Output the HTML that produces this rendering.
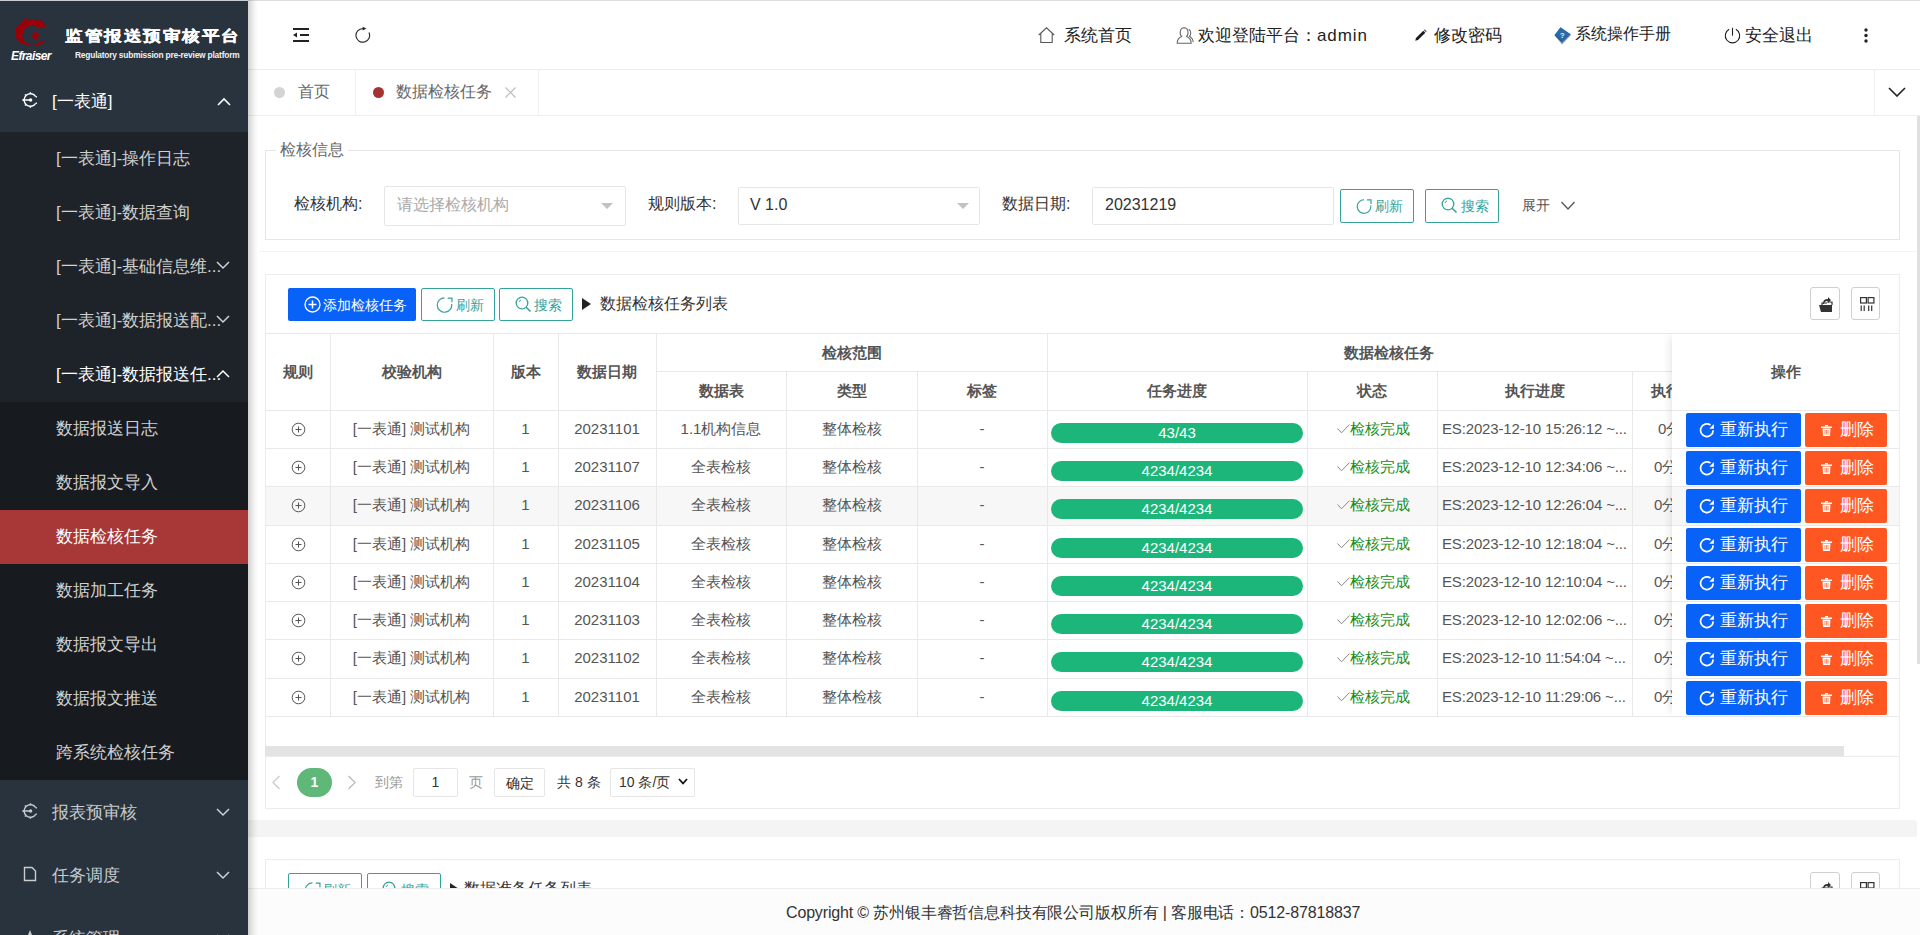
<!DOCTYPE html>
<html><head><meta charset="utf-8">
<style>
*{margin:0;padding:0;box-sizing:border-box}
html,body{width:1920px;height:935px;overflow:hidden;background:#fff;font-family:"Liberation Sans",sans-serif;color:#333}
.a{position:absolute;white-space:nowrap}
#side{position:absolute;left:0;top:0;width:248px;height:935px;background:#28333e;overflow:hidden}
.row{position:absolute;left:0;width:248px}
.sub{background:#1e2329}
.sub2{background:#171b20}
.act{background:#a83737}
.mt{position:absolute;left:56px;font-size:17px;color:#d0d0d0;white-space:nowrap;line-height:20px}
#shadow{position:absolute;left:248px;top:0;width:10px;height:935px;background:linear-gradient(to right,rgba(0,0,0,.18),rgba(0,0,0,.05) 60%,rgba(0,0,0,0));z-index:5}
#hdr{position:absolute;left:248px;top:0;width:1672px;height:70px;background:#fff;border-bottom:1px solid #ececec;border-top:1px solid #dedede}
.ht{position:absolute;font-size:17px;color:#222;white-space:nowrap;top:25px;line-height:20px}
#tabs{position:absolute;left:248px;top:70px;width:1672px;height:46px;background:#fff;border-bottom:1px solid #efefef}
.panel{position:absolute;border:1px solid #e8e8e8;background:#fff}
.bo{position:absolute;border:1px solid #35a39b;color:#35a39b;border-radius:2px;font-size:14px;background:#fff;white-space:nowrap}
#footer{position:absolute;left:248px;top:888px;width:1672px;height:47px;background:#fcfcfc;border-top:1px solid #ececec;font-size:16px;color:#333;z-index:4}
table{border-collapse:collapse;table-layout:fixed}
.tc{position:absolute;text-align:center;font-size:15px;color:#555;white-space:nowrap;overflow:hidden}
.th{position:absolute;text-align:center;font-size:15px;color:#555;font-weight:bold;white-space:nowrap}
.hl{position:absolute;height:1px;background:#e9e9e9}
.vl{position:absolute;width:1px;background:#e9e9e9}
</style></head><body>
<div id="side">
  <div class="a" style="left:0;top:0;width:248px;height:1px;background:#c9cdd1"></div>
  <!-- logo -->
  <svg class="a" style="left:13px;top:16px" width="36" height="32" viewBox="0 0 36 32"><path d="M31 8 A16.9 13 0 1 0 32.8 24.5 L26.6 25.2 A9.6 9.6 0 1 1 25.2 11.95 Z" fill="#9b0009"/><path d="M10.5 1.5 L15.5 4 L12 6.5 Z" fill="#9b0009"/><path d="M25 3.8 C28 4.5 30 6 31.5 8 L32.5 11.5 L25.2 11.95 Z" fill="#9b0009"/><path d="M21.8 15.3 L26.2 18.5 L23.5 24 L18.3 21 Z" fill="#9b0009"/></svg>
  <div class="a" style="left:11px;top:49px;font-size:12px;font-style:italic;font-weight:bold;color:#fff;letter-spacing:-0.6px">Efraiser</div>
  <div class="a" style="left:65px;top:27.5px;font-size:16px;line-height:18px;font-weight:bold;color:#fff;letter-spacing:2.1px;transform-origin:0 0;transform:scale(1.08,0.92);-webkit-text-stroke:0.35px #fff">监管报送预审核平台</div>
  <div class="a" style="left:75px;top:50px;font-size:8.4px;line-height:11px;color:#f0f0f0;font-weight:bold;letter-spacing:-0.2px">Regulatory submission pre-review platform</div>

  <div class="row" style="top:70px;height:62px">
    <svg class="a" style="left:22px;top:22px" width="16" height="16" viewBox="0 0 16 16"><path d="M13.74 4.66 A6.3 6.3 0 1 0 13.74 11.34" fill="none" stroke="#fff" stroke-width="1.4"/><path d="M8.40 1.70 L8.40 0.20 M3.95 3.55 L2.88 2.48 M2.10 8.00 L0.60 8.00 M3.95 12.45 L2.88 13.52 M8.40 14.30 L8.40 15.80 M13.74 4.66 L14.9 5.2 M13.74 11.34 L14.9 10.8" stroke="#fff" stroke-width="1.4"/><path d="M0.6 8 H8" stroke="#fff" stroke-width="1.5"/><circle cx="8.6" cy="8" r="1.7" fill="#fff"/></svg>
    <div class="a" style="left:52px;top:22px;font-size:17px;color:#fff;line-height:20px">[一表通]</div>
    <svg class="a" style="left:217px;top:27px" width="14" height="9" viewBox="0 0 14 9"><path d="M1 8 L7 2 L13 8" fill="none" stroke="#fff" stroke-width="1.6"/></svg>
  </div>
  <div class="row sub" style="top:132px;height:270px">
    <div class="mt" style="top:17px">[一表通]-操作日志</div>
    <div class="mt" style="top:71px">[一表通]-数据查询</div>
    <div class="mt" style="top:125px">[一表通]-基础信息维...</div>
    <div class="mt" style="top:179px">[一表通]-数据报送配...</div>
    <div class="mt" style="top:233px;color:#fff">[一表通]-数据报送任...</div>
    <svg class="a" style="left:216px;top:129px" width="14" height="9" viewBox="0 0 14 9"><path d="M1 1 L7 7 L13 1" fill="none" stroke="#d0d0d0" stroke-width="1.5"/></svg>
    <svg class="a" style="left:216px;top:183px" width="14" height="9" viewBox="0 0 14 9"><path d="M1 1 L7 7 L13 1" fill="none" stroke="#d0d0d0" stroke-width="1.5"/></svg>
    <svg class="a" style="left:216px;top:237px" width="14" height="9" viewBox="0 0 14 9"><path d="M1 8 L7 2 L13 8" fill="none" stroke="#fff" stroke-width="1.5"/></svg>
  </div>
  <div class="row sub2" style="top:402px;height:378px">
    <div class="row act" style="top:108px;height:54px"></div>
    <div class="mt" style="top:17px">数据报送日志</div>
    <div class="mt" style="top:71px">数据报文导入</div>
    <div class="mt" style="top:125px;color:#fff">数据检核任务</div>
    <div class="mt" style="top:179px">数据加工任务</div>
    <div class="mt" style="top:233px">数据报文导出</div>
    <div class="mt" style="top:287px">数据报文推送</div>
    <div class="mt" style="top:341px">跨系统检核任务</div>
  </div>
  <div class="row" style="top:780px;height:63px">
    <svg class="a" style="left:22px;top:23px" width="16" height="16" viewBox="0 0 16 16"><path d="M13.74 4.66 A6.3 6.3 0 1 0 13.74 11.34" fill="none" stroke="#c8ccd0" stroke-width="1.4"/><path d="M8.40 1.70 L8.40 0.20 M3.95 3.55 L2.88 2.48 M2.10 8.00 L0.60 8.00 M3.95 12.45 L2.88 13.52 M8.40 14.30 L8.40 15.80 M13.74 4.66 L14.9 5.2 M13.74 11.34 L14.9 10.8" stroke="#c8ccd0" stroke-width="1.4"/><path d="M0.6 8 H8" stroke="#c8ccd0" stroke-width="1.5"/><circle cx="8.6" cy="8" r="1.7" fill="#c8ccd0"/></svg>
    <div class="a" style="left:52px;top:23px;font-size:17px;color:#c8ccd0;line-height:20px">报表预审核</div>
    <svg class="a" style="left:216px;top:28px" width="14" height="9" viewBox="0 0 14 9"><path d="M1 1 L7 7 L13 1" fill="none" stroke="#d0d0d0" stroke-width="1.5"/></svg>
  </div>
  <div class="row" style="top:843px;height:63px">
    <svg class="a" style="left:23px;top:23px" width="14" height="16" viewBox="0 0 14 16"><path d="M1.5 1.5 H9 L12.5 5 V14.5 H1.5 Z" fill="none" stroke="#ccc" stroke-width="1.4"/></svg>
    <div class="a" style="left:52px;top:23px;font-size:17px;color:#c8ccd0;line-height:20px">任务调度</div>
    <svg class="a" style="left:216px;top:28px" width="14" height="9" viewBox="0 0 14 9"><path d="M1 1 L7 7 L13 1" fill="none" stroke="#d0d0d0" stroke-width="1.5"/></svg>
  </div>
  <div class="row" style="top:906px;height:63px">
    <svg class="a" style="left:22px;top:23px" width="16" height="16" viewBox="0 0 16 16"><path d="M8 1 L10 6 L15 6 L11 9.5 L12.5 15 L8 11.5 L3.5 15 L5 9.5 L1 6 L6 6 Z" fill="#ccc"/></svg>
    <div class="a" style="left:52px;top:23px;font-size:17px;color:#c8ccd0;line-height:20px">系统管理</div>
    <svg class="a" style="left:216px;top:28px" width="14" height="9" viewBox="0 0 14 9"><path d="M1 1 L7 7 L13 1" fill="none" stroke="#d0d0d0" stroke-width="1.5"/></svg>
  </div>
</div>
<div id="shadow"></div>

<div id="hdr">
  <svg class="a" style="left:44px;top:26px;margin-top:-0.5px" width="18" height="16" viewBox="0 0 18 16"><rect x="1" y="1" width="16" height="2" fill="#222"/><rect x="8" y="7" width="9" height="2" fill="#222"/><rect x="1" y="13" width="16" height="2" fill="#222"/><path d="M1 8 L5 5.5 L5 10.5 Z" fill="#222"/></svg>
  <svg class="a" style="left:106px;top:25px" width="17" height="17" viewBox="0 0 17 17"><path d="M8.8 2.6 A6.8 6.8 0 1 0 14.96 6.53" fill="none" stroke="#333" stroke-width="1.2"/><path d="M8.6 0.8 L12.4 2.6 L8.6 4.5 Z" fill="#222"/></svg>
  <svg class="a" style="left:789px;top:25px" width="18" height="18" viewBox="0 0 18 18"><path d="M1.8 9 L9.5 1.8 L17.2 9 M3.8 7.3 V16.5 H15.2 V7.3" fill="none" stroke="#555" stroke-width="1.1"/></svg>
  <div class="ht" style="left:816px">系统首页</div>
  <svg class="a" style="left:928px;top:25px" width="18" height="18" viewBox="0 0 18 18"><path d="M5.6 10.4 C3.3 8.6 3.6 1.8 8.1 1.7 C12.6 1.8 12.9 8.6 10.6 10.4 C13.3 11.4 15.2 14 15.2 17.3 H1.2 C1.2 14 3 11.4 5.6 10.4 Z" fill="none" stroke="#666" stroke-width="1.05"/><path d="M12.6 3.2 C15.2 4.2 15.3 8.6 13.5 10.3 C15.6 11.5 17 13.5 17.2 16.3" fill="none" stroke="#666" stroke-width="1.05"/></svg>
  <div class="ht" style="left:950px">欢迎登陆平台：<span style="letter-spacing:0.9px">admin</span></div>
  <svg class="a" style="left:1166px;top:28px" width="13" height="13" viewBox="0 0 13 13"><path d="M1.2 11.8 L2.0 9.0 L9.3 1.7 L11.3 3.7 L4.0 11.0 Z" fill="#1a1a1a"/><path d="M9.9 1.1 L10.6 0.4 L12.6 2.4 L11.9 3.1 Z" fill="#1a1a1a"/></svg>
  <div class="ht" style="left:1186px">修改密码</div>
  <svg class="a" style="left:1306px;top:26px" width="18" height="18" viewBox="0 0 18 18"><path d="M0.5 8.5 L6.5 0.5 L17 8 L8 17.5 Z" fill="#8aa4bf"/><path d="M0.5 8 L6.5 0.3 L16.8 7.3 L8 15.8 Z" fill="#2b6aa8"/><path d="M1.5 8.2 L7.8 14.6" stroke="#1d4f82" stroke-width="1"/><text x="6" y="10.5" font-size="7.5" fill="#e8f0ff" font-family="Liberation Sans" font-weight="bold">?</text></svg>
  <div class="ht" style="left:1327px;font-size:16px;top:23px">系统操作手册</div>
  <svg class="a" style="left:1475px;top:26px" width="19" height="18" viewBox="0 0 19 18"><path d="M6.12 2.34 A7.2 7.2 0 1 0 12.88 2.34" fill="none" stroke="#222" stroke-width="1.1"/><path d="M9.5 0.8 V8.7" stroke="#222" stroke-width="1.1"/></svg>
  <div class="ht" style="left:1497px">安全退出</div>
  <svg class="a" style="left:1616px;top:27px" width="4" height="15" viewBox="0 0 4 15"><circle cx="2" cy="2" r="1.7" fill="#222"/><circle cx="2" cy="7.5" r="1.7" fill="#222"/><circle cx="2" cy="13" r="1.7" fill="#222"/></svg>
</div>


<div id="tabs">
  <div class="a" style="left:107px;top:0;width:1px;height:45px;background:#f0f0f0"></div>
  <div class="a" style="left:290px;top:0;width:1px;height:45px;background:#f0f0f0"></div>
  <div class="a" style="left:1626px;top:0;width:1px;height:45px;background:#efefef"></div>
  <div class="a" style="left:26px;top:17px;width:11px;height:11px;border-radius:50%;background:#d4d4d4"></div>
  <div class="a" style="left:50px;top:12px;font-size:16px;color:#666;line-height:20px">首页</div>
  <div class="a" style="left:125px;top:17px;width:11px;height:11px;border-radius:50%;background:#a83232"></div>
  <div class="a" style="left:148px;top:12px;font-size:16px;color:#666;line-height:20px">数据检核任务</div>
  <svg class="a" style="left:257px;top:17px" width="11" height="11" viewBox="0 0 11 11"><path d="M0.5 0.5 L10.5 10.5 M10.5 0.5 L0.5 10.5" stroke="#bbb" stroke-width="1.1"/></svg>
  <svg class="a" style="left:1640px;top:17px" width="18" height="10" viewBox="0 0 18 10"><path d="M1 1 L9 9 L17 1" fill="none" stroke="#222" stroke-width="1.6"/></svg>
</div>

<!--MAIN_START-->
<div class="a" style="left:265px;top:150px;width:1635px;height:90px;border:1px solid #e6e6e6"></div>
<div class="a" style="left:276px;top:140px;width:72px;height:20px;background:#fff"></div>
<div class="a" style="left:280px;top:140px;font-size:16px;color:#666;line-height:20px;">检核信息</div>
<div class="a" style="left:259px;top:251px;width:1661px;height:1px;background:#f2f2f2"></div>
<div class="a" style="left:294px;top:194px;font-size:16px;color:#333;line-height:20px;">检核机构:</div>
<div class="a" style="left:648px;top:194px;font-size:16px;color:#333;line-height:20px;">规则版本:</div>
<div class="a" style="left:1002px;top:194px;font-size:16px;color:#333;line-height:20px;">数据日期:</div>
<div class="a" style="left:384px;top:186px;width:242px;height:40px;border:1px solid #e6e6e6;border-radius:2px"></div>
<div class="a" style="left:397px;top:195px;font-size:16px;color:#aaa;line-height:20px;">请选择检核机构</div>
<svg class="a" style="left:601px;top:203px" width="12" height="6" viewBox="0 0 12 6"><path d="M0 0 H12 L6 6 Z" fill="#c2c2c2"/></svg>
<div class="a" style="left:738px;top:187px;width:242px;height:38px;border:1px solid #e6e6e6;border-radius:2px"></div>
<div class="a" style="left:750px;top:195px;font-size:16px;color:#333;line-height:20px;">V 1.0</div>
<svg class="a" style="left:957px;top:203px" width="12" height="6" viewBox="0 0 12 6"><path d="M0 0 H12 L6 6 Z" fill="#c2c2c2"/></svg>
<div class="a" style="left:1092px;top:187px;width:242px;height:38px;border:1px solid #e6e6e6;border-radius:2px"></div>
<div class="a" style="left:1105px;top:195px;font-size:16px;color:#333;line-height:20px;">20231219</div>
<div class="bo" style="left:1340px;top:189px;width:74px;height:34px"></div>
<svg class="a" style="left:1356px;top:198px" width="16" height="16" viewBox="0 0 16 16"><path d="M8 1.7 A6.8 6.8 0 1 0 14.7 7.32" fill="none" stroke="#35a39b" stroke-width="1.15"/><path d="M11 1.9 H15 V5.9" fill="none" stroke="#35a39b" stroke-width="1.15"/></svg>
<div class="a" style="left:1375px;top:196px;font-size:14px;color:#35a39b;line-height:20px;">刷新</div>
<div class="bo" style="left:1425px;top:189px;width:74px;height:34px"></div>
<svg class="a" style="left:1441px;top:197px" width="17" height="17" viewBox="0 0 17 17"><circle cx="7" cy="7" r="5.8" fill="none" stroke="#35a39b" stroke-width="1.3"/><path d="M11.2 11.2 L15.5 15.5" stroke="#35a39b" stroke-width="1.6"/><path d="M4 6 A3 3 0 0 1 6 4" fill="none" stroke="#35a39b" stroke-width="1"/></svg>
<div class="a" style="left:1461px;top:196px;font-size:14px;color:#35a39b;line-height:20px;">搜索</div>
<div class="a" style="left:1522px;top:195px;font-size:14px;color:#555;line-height:20px;">展开</div>
<svg class="a" style="left:1561px;top:201px" width="14" height="9" viewBox="0 0 14 9"><path d="M0.5 1 L7 8 L13.5 1" fill="none" stroke="#555" stroke-width="1.3"/></svg>
<div class="a" style="left:265px;top:274px;width:1635px;height:535px;border:1px solid #ececec"></div>
<div class="a" style="left:288px;top:288px;width:128px;height:33px;background:#0862f7;border-radius:2px"></div>
<svg class="a" style="left:304px;top:296px" width="17" height="17" viewBox="0 0 17 17"><circle cx="8.5" cy="8.5" r="7.5" fill="none" stroke="#fff" stroke-width="1.3"/><path d="M8.5 4.5 V12.5 M4.5 8.5 H12.5" stroke="#fff" stroke-width="1.5"/></svg>
<div class="a" style="left:323px;top:295px;font-size:14px;color:#fff;line-height:20px;">添加检核任务</div>
<div class="bo" style="left:421px;top:288px;width:74px;height:33px"></div>
<svg class="a" style="left:436px;top:296px" width="17" height="17" viewBox="0 0 16 16"><path d="M8 1.7 A6.8 6.8 0 1 0 14.7 7.32" fill="none" stroke="#35a39b" stroke-width="1.15"/><path d="M11 1.9 H15 V5.9" fill="none" stroke="#35a39b" stroke-width="1.15"/></svg>
<div class="a" style="left:456px;top:295px;font-size:14px;color:#35a39b;line-height:20px;">刷新</div>
<div class="bo" style="left:499px;top:288px;width:74px;height:33px"></div>
<svg class="a" style="left:515px;top:296px" width="17" height="17" viewBox="0 0 17 17"><circle cx="7" cy="7" r="5.8" fill="none" stroke="#35a39b" stroke-width="1.3"/><path d="M11.2 11.2 L15.5 15.5" stroke="#35a39b" stroke-width="1.6"/><path d="M4 6 A3 3 0 0 1 6 4" fill="none" stroke="#35a39b" stroke-width="1"/></svg>
<div class="a" style="left:534px;top:295px;font-size:14px;color:#35a39b;line-height:20px;">搜索</div>
<svg class="a" style="left:582px;top:298px" width="9" height="12" viewBox="0 0 9 12"><path d="M0 0 L9 6 L0 12 Z" fill="#222"/></svg>
<div class="a" style="left:600px;top:294px;font-size:16px;color:#333;line-height:20px;">数据检核任务列表</div>
<div class="a" style="left:1810px;top:287px;width:30px;height:33px;border:1px solid #cfcfcf;border-radius:3px"></div>
<svg class="a" style="left:1818px;top:296px" width="16" height="16" viewBox="0 0 16 16"><path d="M1 9 H14 V16 H3 Z" fill="#333"/><path d="M4 9 V7 H9 M9 6 V6 H14 V9" fill="none" stroke="#333" stroke-width="1.2"/><path d="M5 8 C5 4 7 3 10 3 V1 L13 4 L10 7 V5 C8 5 6.5 5.5 6 8" fill="#333"/></svg>
<div class="a" style="left:1851px;top:287px;width:29px;height:33px;border:1px solid #cfcfcf;border-radius:3px"></div>
<svg class="a" style="left:1860px;top:297px" width="15" height="15" viewBox="0 0 15 15"><rect x="0.6" y="0.6" width="5.8" height="5.4" fill="none" stroke="#333" stroke-width="1.2"/><rect x="8.1" y="0.6" width="5.8" height="5.4" fill="none" stroke="#333" stroke-width="1.2"/><path d="M1.2 8.5 V14 M4.2 8.5 V14 M8.7 8.5 V14 M11.7 8.5 V14" stroke="#333" stroke-width="1.2"/></svg>
<div class="hl" style="left:265px;top:333px;width:1635px"></div>
<div class="hl" style="left:656px;top:371px;width:1016px"></div>
<div class="a" style="left:266px;top:487px;width:1633px;height:38px;background:#f7f7f7"></div>
<div class="hl" style="left:265px;top:410px;width:1635px"></div>
<div class="hl" style="left:265px;top:448px;width:1635px"></div>
<div class="hl" style="left:265px;top:486px;width:1635px"></div>
<div class="hl" style="left:265px;top:525px;width:1635px"></div>
<div class="hl" style="left:265px;top:563px;width:1635px"></div>
<div class="hl" style="left:265px;top:601px;width:1635px"></div>
<div class="hl" style="left:265px;top:639px;width:1635px"></div>
<div class="hl" style="left:265px;top:678px;width:1635px"></div>
<div class="hl" style="left:265px;top:716px;width:1635px"></div>
<div class="vl" style="left:330px;top:333px;height:383px"></div>
<div class="vl" style="left:493px;top:333px;height:383px"></div>
<div class="vl" style="left:558px;top:333px;height:383px"></div>
<div class="vl" style="left:656px;top:333px;height:383px"></div>
<div class="vl" style="left:1047px;top:333px;height:383px"></div>
<div class="vl" style="left:786px;top:371px;height:345px"></div>
<div class="vl" style="left:917px;top:371px;height:345px"></div>
<div class="vl" style="left:1307px;top:371px;height:345px"></div>
<div class="vl" style="left:1437px;top:371px;height:345px"></div>
<div class="vl" style="left:1632px;top:371px;height:345px"></div>
<div class="th" style="left:265px;width:65px;top:362px;line-height:20px">规则</div>
<div class="th" style="left:330px;width:163px;top:362px;line-height:20px">校验机构</div>
<div class="th" style="left:493px;width:65px;top:362px;line-height:20px">版本</div>
<div class="th" style="left:558px;width:98px;top:362px;line-height:20px">数据日期</div>
<div class="th" style="left:656px;width:391px;top:343px;line-height:20px">检核范围</div>
<div class="th" style="left:1047px;width:684px;top:343px;line-height:20px">数据检核任务</div>
<div class="th" style="left:656px;width:130px;top:381px;line-height:20px">数据表</div>
<div class="th" style="left:786px;width:131px;top:381px;line-height:20px">类型</div>
<div class="th" style="left:917px;width:130px;top:381px;line-height:20px">标签</div>
<div class="th" style="left:1047px;width:260px;top:381px;line-height:20px">任务进度</div>
<div class="th" style="left:1307px;width:130px;top:381px;line-height:20px">状态</div>
<div class="th" style="left:1437px;width:195px;top:381px;line-height:20px">执行进度</div>
<div class="th" style="left:1651px;top:381px;line-height:20px;text-align:left">执行</div>
<svg class="a" style="left:291px;top:422px" width="15" height="15" viewBox="0 0 15 15"><circle cx="7.5" cy="7.5" r="6.3" fill="none" stroke="#555" stroke-width="1"/><path d="M7.5 4.5 V10.5 M4.5 7.5 H10.5" stroke="#555" stroke-width="1"/></svg>
<div class="tc" style="left:330px;width:163px;top:419px;line-height:20px;">[一表通] 测试机构</div>
<div class="tc" style="left:493px;width:65px;top:419px;line-height:20px;">1</div>
<div class="tc" style="left:558px;width:98px;top:419px;line-height:20px;">20231101</div>
<div class="tc" style="left:656px;width:130px;top:419px;line-height:20px;">1.1机构信息</div>
<div class="tc" style="left:786px;width:131px;top:419px;line-height:20px;">整体检核</div>
<div class="tc" style="left:917px;width:130px;top:419px;line-height:20px;">-</div>
<div class="a" style="left:1051px;top:423px;width:252px;height:20px;border-radius:10px;background:#1db67a"></div>
<div class="tc" style="left:1051px;width:252px;top:422px;line-height:20px;color:#fff;font-size:15px;line-height:22px">43/43</div>
<svg class="a" style="left:1337px;top:424px" width="13" height="10" viewBox="0 0 13 10"><path d="M0.5 4.5 L4.5 8.8 L12.5 0.5" fill="none" stroke="#888" stroke-width="1"/></svg>
<div class="a" style="left:1350px;top:419px;font-size:15px;color:#178c17;line-height:20px;">检核完成</div>
<div class="a" style="left:1442px;top:419px;font-size:15px;color:#555;line-height:20px;letter-spacing:-0.15px">ES:2023-12-10 15:26:12 ~...</div>
<div class="a" style="left:1658px;top:419px;font-size:15px;color:#555;line-height:20px;">0分</div>
<svg class="a" style="left:291px;top:460px" width="15" height="15" viewBox="0 0 15 15"><circle cx="7.5" cy="7.5" r="6.3" fill="none" stroke="#555" stroke-width="1"/><path d="M7.5 4.5 V10.5 M4.5 7.5 H10.5" stroke="#555" stroke-width="1"/></svg>
<div class="tc" style="left:330px;width:163px;top:457px;line-height:20px;">[一表通] 测试机构</div>
<div class="tc" style="left:493px;width:65px;top:457px;line-height:20px;">1</div>
<div class="tc" style="left:558px;width:98px;top:457px;line-height:20px;">20231107</div>
<div class="tc" style="left:656px;width:130px;top:457px;line-height:20px;">全表检核</div>
<div class="tc" style="left:786px;width:131px;top:457px;line-height:20px;">整体检核</div>
<div class="tc" style="left:917px;width:130px;top:457px;line-height:20px;">-</div>
<div class="a" style="left:1051px;top:461px;width:252px;height:20px;border-radius:10px;background:#1db67a"></div>
<div class="tc" style="left:1051px;width:252px;top:460px;line-height:20px;color:#fff;font-size:15px;line-height:22px">4234/4234</div>
<svg class="a" style="left:1337px;top:462px" width="13" height="10" viewBox="0 0 13 10"><path d="M0.5 4.5 L4.5 8.8 L12.5 0.5" fill="none" stroke="#888" stroke-width="1"/></svg>
<div class="a" style="left:1350px;top:457px;font-size:15px;color:#178c17;line-height:20px;">检核完成</div>
<div class="a" style="left:1442px;top:457px;font-size:15px;color:#555;line-height:20px;letter-spacing:-0.15px">ES:2023-12-10 12:34:06 ~...</div>
<div class="a" style="left:1654px;top:457px;font-size:15px;color:#555;line-height:20px;">0分</div>
<svg class="a" style="left:291px;top:498px" width="15" height="15" viewBox="0 0 15 15"><circle cx="7.5" cy="7.5" r="6.3" fill="none" stroke="#555" stroke-width="1"/><path d="M7.5 4.5 V10.5 M4.5 7.5 H10.5" stroke="#555" stroke-width="1"/></svg>
<div class="tc" style="left:330px;width:163px;top:495px;line-height:20px;">[一表通] 测试机构</div>
<div class="tc" style="left:493px;width:65px;top:495px;line-height:20px;">1</div>
<div class="tc" style="left:558px;width:98px;top:495px;line-height:20px;">20231106</div>
<div class="tc" style="left:656px;width:130px;top:495px;line-height:20px;">全表检核</div>
<div class="tc" style="left:786px;width:131px;top:495px;line-height:20px;">整体检核</div>
<div class="tc" style="left:917px;width:130px;top:495px;line-height:20px;">-</div>
<div class="a" style="left:1051px;top:499px;width:252px;height:20px;border-radius:10px;background:#1db67a"></div>
<div class="tc" style="left:1051px;width:252px;top:498px;line-height:20px;color:#fff;font-size:15px;line-height:22px">4234/4234</div>
<svg class="a" style="left:1337px;top:500px" width="13" height="10" viewBox="0 0 13 10"><path d="M0.5 4.5 L4.5 8.8 L12.5 0.5" fill="none" stroke="#888" stroke-width="1"/></svg>
<div class="a" style="left:1350px;top:495px;font-size:15px;color:#178c17;line-height:20px;">检核完成</div>
<div class="a" style="left:1442px;top:495px;font-size:15px;color:#555;line-height:20px;letter-spacing:-0.15px">ES:2023-12-10 12:26:04 ~...</div>
<div class="a" style="left:1654px;top:495px;font-size:15px;color:#555;line-height:20px;">0分</div>
<svg class="a" style="left:291px;top:537px" width="15" height="15" viewBox="0 0 15 15"><circle cx="7.5" cy="7.5" r="6.3" fill="none" stroke="#555" stroke-width="1"/><path d="M7.5 4.5 V10.5 M4.5 7.5 H10.5" stroke="#555" stroke-width="1"/></svg>
<div class="tc" style="left:330px;width:163px;top:534px;line-height:20px;">[一表通] 测试机构</div>
<div class="tc" style="left:493px;width:65px;top:534px;line-height:20px;">1</div>
<div class="tc" style="left:558px;width:98px;top:534px;line-height:20px;">20231105</div>
<div class="tc" style="left:656px;width:130px;top:534px;line-height:20px;">全表检核</div>
<div class="tc" style="left:786px;width:131px;top:534px;line-height:20px;">整体检核</div>
<div class="tc" style="left:917px;width:130px;top:534px;line-height:20px;">-</div>
<div class="a" style="left:1051px;top:538px;width:252px;height:20px;border-radius:10px;background:#1db67a"></div>
<div class="tc" style="left:1051px;width:252px;top:537px;line-height:20px;color:#fff;font-size:15px;line-height:22px">4234/4234</div>
<svg class="a" style="left:1337px;top:539px" width="13" height="10" viewBox="0 0 13 10"><path d="M0.5 4.5 L4.5 8.8 L12.5 0.5" fill="none" stroke="#888" stroke-width="1"/></svg>
<div class="a" style="left:1350px;top:534px;font-size:15px;color:#178c17;line-height:20px;">检核完成</div>
<div class="a" style="left:1442px;top:534px;font-size:15px;color:#555;line-height:20px;letter-spacing:-0.15px">ES:2023-12-10 12:18:04 ~...</div>
<div class="a" style="left:1654px;top:534px;font-size:15px;color:#555;line-height:20px;">0分</div>
<svg class="a" style="left:291px;top:575px" width="15" height="15" viewBox="0 0 15 15"><circle cx="7.5" cy="7.5" r="6.3" fill="none" stroke="#555" stroke-width="1"/><path d="M7.5 4.5 V10.5 M4.5 7.5 H10.5" stroke="#555" stroke-width="1"/></svg>
<div class="tc" style="left:330px;width:163px;top:572px;line-height:20px;">[一表通] 测试机构</div>
<div class="tc" style="left:493px;width:65px;top:572px;line-height:20px;">1</div>
<div class="tc" style="left:558px;width:98px;top:572px;line-height:20px;">20231104</div>
<div class="tc" style="left:656px;width:130px;top:572px;line-height:20px;">全表检核</div>
<div class="tc" style="left:786px;width:131px;top:572px;line-height:20px;">整体检核</div>
<div class="tc" style="left:917px;width:130px;top:572px;line-height:20px;">-</div>
<div class="a" style="left:1051px;top:576px;width:252px;height:20px;border-radius:10px;background:#1db67a"></div>
<div class="tc" style="left:1051px;width:252px;top:575px;line-height:20px;color:#fff;font-size:15px;line-height:22px">4234/4234</div>
<svg class="a" style="left:1337px;top:577px" width="13" height="10" viewBox="0 0 13 10"><path d="M0.5 4.5 L4.5 8.8 L12.5 0.5" fill="none" stroke="#888" stroke-width="1"/></svg>
<div class="a" style="left:1350px;top:572px;font-size:15px;color:#178c17;line-height:20px;">检核完成</div>
<div class="a" style="left:1442px;top:572px;font-size:15px;color:#555;line-height:20px;letter-spacing:-0.15px">ES:2023-12-10 12:10:04 ~...</div>
<div class="a" style="left:1654px;top:572px;font-size:15px;color:#555;line-height:20px;">0分</div>
<svg class="a" style="left:291px;top:613px" width="15" height="15" viewBox="0 0 15 15"><circle cx="7.5" cy="7.5" r="6.3" fill="none" stroke="#555" stroke-width="1"/><path d="M7.5 4.5 V10.5 M4.5 7.5 H10.5" stroke="#555" stroke-width="1"/></svg>
<div class="tc" style="left:330px;width:163px;top:610px;line-height:20px;">[一表通] 测试机构</div>
<div class="tc" style="left:493px;width:65px;top:610px;line-height:20px;">1</div>
<div class="tc" style="left:558px;width:98px;top:610px;line-height:20px;">20231103</div>
<div class="tc" style="left:656px;width:130px;top:610px;line-height:20px;">全表检核</div>
<div class="tc" style="left:786px;width:131px;top:610px;line-height:20px;">整体检核</div>
<div class="tc" style="left:917px;width:130px;top:610px;line-height:20px;">-</div>
<div class="a" style="left:1051px;top:614px;width:252px;height:20px;border-radius:10px;background:#1db67a"></div>
<div class="tc" style="left:1051px;width:252px;top:613px;line-height:20px;color:#fff;font-size:15px;line-height:22px">4234/4234</div>
<svg class="a" style="left:1337px;top:615px" width="13" height="10" viewBox="0 0 13 10"><path d="M0.5 4.5 L4.5 8.8 L12.5 0.5" fill="none" stroke="#888" stroke-width="1"/></svg>
<div class="a" style="left:1350px;top:610px;font-size:15px;color:#178c17;line-height:20px;">检核完成</div>
<div class="a" style="left:1442px;top:610px;font-size:15px;color:#555;line-height:20px;letter-spacing:-0.15px">ES:2023-12-10 12:02:06 ~...</div>
<div class="a" style="left:1654px;top:610px;font-size:15px;color:#555;line-height:20px;">0分</div>
<svg class="a" style="left:291px;top:651px" width="15" height="15" viewBox="0 0 15 15"><circle cx="7.5" cy="7.5" r="6.3" fill="none" stroke="#555" stroke-width="1"/><path d="M7.5 4.5 V10.5 M4.5 7.5 H10.5" stroke="#555" stroke-width="1"/></svg>
<div class="tc" style="left:330px;width:163px;top:648px;line-height:20px;">[一表通] 测试机构</div>
<div class="tc" style="left:493px;width:65px;top:648px;line-height:20px;">1</div>
<div class="tc" style="left:558px;width:98px;top:648px;line-height:20px;">20231102</div>
<div class="tc" style="left:656px;width:130px;top:648px;line-height:20px;">全表检核</div>
<div class="tc" style="left:786px;width:131px;top:648px;line-height:20px;">整体检核</div>
<div class="tc" style="left:917px;width:130px;top:648px;line-height:20px;">-</div>
<div class="a" style="left:1051px;top:652px;width:252px;height:20px;border-radius:10px;background:#1db67a"></div>
<div class="tc" style="left:1051px;width:252px;top:651px;line-height:20px;color:#fff;font-size:15px;line-height:22px">4234/4234</div>
<svg class="a" style="left:1337px;top:653px" width="13" height="10" viewBox="0 0 13 10"><path d="M0.5 4.5 L4.5 8.8 L12.5 0.5" fill="none" stroke="#888" stroke-width="1"/></svg>
<div class="a" style="left:1350px;top:648px;font-size:15px;color:#178c17;line-height:20px;">检核完成</div>
<div class="a" style="left:1442px;top:648px;font-size:15px;color:#555;line-height:20px;letter-spacing:-0.15px">ES:2023-12-10 11:54:04 ~...</div>
<div class="a" style="left:1654px;top:648px;font-size:15px;color:#555;line-height:20px;">0分</div>
<svg class="a" style="left:291px;top:690px" width="15" height="15" viewBox="0 0 15 15"><circle cx="7.5" cy="7.5" r="6.3" fill="none" stroke="#555" stroke-width="1"/><path d="M7.5 4.5 V10.5 M4.5 7.5 H10.5" stroke="#555" stroke-width="1"/></svg>
<div class="tc" style="left:330px;width:163px;top:687px;line-height:20px;">[一表通] 测试机构</div>
<div class="tc" style="left:493px;width:65px;top:687px;line-height:20px;">1</div>
<div class="tc" style="left:558px;width:98px;top:687px;line-height:20px;">20231101</div>
<div class="tc" style="left:656px;width:130px;top:687px;line-height:20px;">全表检核</div>
<div class="tc" style="left:786px;width:131px;top:687px;line-height:20px;">整体检核</div>
<div class="tc" style="left:917px;width:130px;top:687px;line-height:20px;">-</div>
<div class="a" style="left:1051px;top:691px;width:252px;height:20px;border-radius:10px;background:#1db67a"></div>
<div class="tc" style="left:1051px;width:252px;top:690px;line-height:20px;color:#fff;font-size:15px;line-height:22px">4234/4234</div>
<svg class="a" style="left:1337px;top:692px" width="13" height="10" viewBox="0 0 13 10"><path d="M0.5 4.5 L4.5 8.8 L12.5 0.5" fill="none" stroke="#888" stroke-width="1"/></svg>
<div class="a" style="left:1350px;top:687px;font-size:15px;color:#178c17;line-height:20px;">检核完成</div>
<div class="a" style="left:1442px;top:687px;font-size:15px;color:#555;line-height:20px;letter-spacing:-0.15px">ES:2023-12-10 11:29:06 ~...</div>
<div class="a" style="left:1654px;top:687px;font-size:15px;color:#555;line-height:20px;">0分</div>
<div class="a" style="left:1672px;top:333px;width:228px;height:383px;background:#fff;box-shadow:-6px 0 8px -4px rgba(0,0,0,.10);border-right:1px solid #ececec"></div>
<div class="hl" style="left:1672px;top:333px;width:228px"></div>
<div class="hl" style="left:1672px;top:410px;width:228px"></div>
<div class="a" style="left:1686px;top:413px;width:115px;height:34px;background:#0862f7;border-radius:2px"></div>
<svg class="a" style="left:1699px;top:422px" width="16" height="16" viewBox="0 0 16 16"><path d="M14.2 8.4 A6.3 6.3 0 1 1 11.5 3.04" fill="none" stroke="#fff" stroke-width="1.7"/><path d="M10.3 6.7 L14.9 6.7 L14.9 2 Z" fill="#fff"/></svg>
<div class="a" style="left:1720px;top:420px;font-size:17px;color:#fff;line-height:20px;">重新执行</div>
<div class="a" style="left:1805px;top:413px;width:82px;height:34px;background:#fe5722;border-radius:2px"></div>
<svg class="a" style="left:1821px;top:425px" width="11" height="11" viewBox="0 0 11 11"><rect x="0" y="1.5" width="11" height="1.5" fill="#fff"/><rect x="4" y="0" width="3" height="1.5" fill="#fff"/><path d="M1.5 3.5 H9.5 L9 11 H2 Z" fill="#fff"/><path d="M4 5 V9.5 M5.5 5 V9.5 M7 5 V9.5" stroke="#ff5722" stroke-width="0.7"/></svg>
<div class="a" style="left:1840px;top:420px;font-size:17px;color:#fff;line-height:20px;">删除</div>
<div class="hl" style="left:1672px;top:448px;width:228px"></div>
<div class="a" style="left:1686px;top:451px;width:115px;height:34px;background:#0862f7;border-radius:2px"></div>
<svg class="a" style="left:1699px;top:460px" width="16" height="16" viewBox="0 0 16 16"><path d="M14.2 8.4 A6.3 6.3 0 1 1 11.5 3.04" fill="none" stroke="#fff" stroke-width="1.7"/><path d="M10.3 6.7 L14.9 6.7 L14.9 2 Z" fill="#fff"/></svg>
<div class="a" style="left:1720px;top:458px;font-size:17px;color:#fff;line-height:20px;">重新执行</div>
<div class="a" style="left:1805px;top:451px;width:82px;height:34px;background:#fe5722;border-radius:2px"></div>
<svg class="a" style="left:1821px;top:463px" width="11" height="11" viewBox="0 0 11 11"><rect x="0" y="1.5" width="11" height="1.5" fill="#fff"/><rect x="4" y="0" width="3" height="1.5" fill="#fff"/><path d="M1.5 3.5 H9.5 L9 11 H2 Z" fill="#fff"/><path d="M4 5 V9.5 M5.5 5 V9.5 M7 5 V9.5" stroke="#ff5722" stroke-width="0.7"/></svg>
<div class="a" style="left:1840px;top:458px;font-size:17px;color:#fff;line-height:20px;">删除</div>
<div class="a" style="left:1672px;top:487px;width:227px;height:38px;background:#f7f7f7"></div>
<div class="hl" style="left:1672px;top:486px;width:228px"></div>
<div class="a" style="left:1686px;top:489px;width:115px;height:34px;background:#0862f7;border-radius:2px"></div>
<svg class="a" style="left:1699px;top:498px" width="16" height="16" viewBox="0 0 16 16"><path d="M14.2 8.4 A6.3 6.3 0 1 1 11.5 3.04" fill="none" stroke="#fff" stroke-width="1.7"/><path d="M10.3 6.7 L14.9 6.7 L14.9 2 Z" fill="#fff"/></svg>
<div class="a" style="left:1720px;top:496px;font-size:17px;color:#fff;line-height:20px;">重新执行</div>
<div class="a" style="left:1805px;top:489px;width:82px;height:34px;background:#fe5722;border-radius:2px"></div>
<svg class="a" style="left:1821px;top:501px" width="11" height="11" viewBox="0 0 11 11"><rect x="0" y="1.5" width="11" height="1.5" fill="#fff"/><rect x="4" y="0" width="3" height="1.5" fill="#fff"/><path d="M1.5 3.5 H9.5 L9 11 H2 Z" fill="#fff"/><path d="M4 5 V9.5 M5.5 5 V9.5 M7 5 V9.5" stroke="#ff5722" stroke-width="0.7"/></svg>
<div class="a" style="left:1840px;top:496px;font-size:17px;color:#fff;line-height:20px;">删除</div>
<div class="hl" style="left:1672px;top:525px;width:228px"></div>
<div class="a" style="left:1686px;top:528px;width:115px;height:34px;background:#0862f7;border-radius:2px"></div>
<svg class="a" style="left:1699px;top:537px" width="16" height="16" viewBox="0 0 16 16"><path d="M14.2 8.4 A6.3 6.3 0 1 1 11.5 3.04" fill="none" stroke="#fff" stroke-width="1.7"/><path d="M10.3 6.7 L14.9 6.7 L14.9 2 Z" fill="#fff"/></svg>
<div class="a" style="left:1720px;top:535px;font-size:17px;color:#fff;line-height:20px;">重新执行</div>
<div class="a" style="left:1805px;top:528px;width:82px;height:34px;background:#fe5722;border-radius:2px"></div>
<svg class="a" style="left:1821px;top:540px" width="11" height="11" viewBox="0 0 11 11"><rect x="0" y="1.5" width="11" height="1.5" fill="#fff"/><rect x="4" y="0" width="3" height="1.5" fill="#fff"/><path d="M1.5 3.5 H9.5 L9 11 H2 Z" fill="#fff"/><path d="M4 5 V9.5 M5.5 5 V9.5 M7 5 V9.5" stroke="#ff5722" stroke-width="0.7"/></svg>
<div class="a" style="left:1840px;top:535px;font-size:17px;color:#fff;line-height:20px;">删除</div>
<div class="hl" style="left:1672px;top:563px;width:228px"></div>
<div class="a" style="left:1686px;top:566px;width:115px;height:34px;background:#0862f7;border-radius:2px"></div>
<svg class="a" style="left:1699px;top:575px" width="16" height="16" viewBox="0 0 16 16"><path d="M14.2 8.4 A6.3 6.3 0 1 1 11.5 3.04" fill="none" stroke="#fff" stroke-width="1.7"/><path d="M10.3 6.7 L14.9 6.7 L14.9 2 Z" fill="#fff"/></svg>
<div class="a" style="left:1720px;top:573px;font-size:17px;color:#fff;line-height:20px;">重新执行</div>
<div class="a" style="left:1805px;top:566px;width:82px;height:34px;background:#fe5722;border-radius:2px"></div>
<svg class="a" style="left:1821px;top:578px" width="11" height="11" viewBox="0 0 11 11"><rect x="0" y="1.5" width="11" height="1.5" fill="#fff"/><rect x="4" y="0" width="3" height="1.5" fill="#fff"/><path d="M1.5 3.5 H9.5 L9 11 H2 Z" fill="#fff"/><path d="M4 5 V9.5 M5.5 5 V9.5 M7 5 V9.5" stroke="#ff5722" stroke-width="0.7"/></svg>
<div class="a" style="left:1840px;top:573px;font-size:17px;color:#fff;line-height:20px;">删除</div>
<div class="hl" style="left:1672px;top:601px;width:228px"></div>
<div class="a" style="left:1686px;top:604px;width:115px;height:34px;background:#0862f7;border-radius:2px"></div>
<svg class="a" style="left:1699px;top:613px" width="16" height="16" viewBox="0 0 16 16"><path d="M14.2 8.4 A6.3 6.3 0 1 1 11.5 3.04" fill="none" stroke="#fff" stroke-width="1.7"/><path d="M10.3 6.7 L14.9 6.7 L14.9 2 Z" fill="#fff"/></svg>
<div class="a" style="left:1720px;top:611px;font-size:17px;color:#fff;line-height:20px;">重新执行</div>
<div class="a" style="left:1805px;top:604px;width:82px;height:34px;background:#fe5722;border-radius:2px"></div>
<svg class="a" style="left:1821px;top:616px" width="11" height="11" viewBox="0 0 11 11"><rect x="0" y="1.5" width="11" height="1.5" fill="#fff"/><rect x="4" y="0" width="3" height="1.5" fill="#fff"/><path d="M1.5 3.5 H9.5 L9 11 H2 Z" fill="#fff"/><path d="M4 5 V9.5 M5.5 5 V9.5 M7 5 V9.5" stroke="#ff5722" stroke-width="0.7"/></svg>
<div class="a" style="left:1840px;top:611px;font-size:17px;color:#fff;line-height:20px;">删除</div>
<div class="hl" style="left:1672px;top:639px;width:228px"></div>
<div class="a" style="left:1686px;top:642px;width:115px;height:34px;background:#0862f7;border-radius:2px"></div>
<svg class="a" style="left:1699px;top:651px" width="16" height="16" viewBox="0 0 16 16"><path d="M14.2 8.4 A6.3 6.3 0 1 1 11.5 3.04" fill="none" stroke="#fff" stroke-width="1.7"/><path d="M10.3 6.7 L14.9 6.7 L14.9 2 Z" fill="#fff"/></svg>
<div class="a" style="left:1720px;top:649px;font-size:17px;color:#fff;line-height:20px;">重新执行</div>
<div class="a" style="left:1805px;top:642px;width:82px;height:34px;background:#fe5722;border-radius:2px"></div>
<svg class="a" style="left:1821px;top:654px" width="11" height="11" viewBox="0 0 11 11"><rect x="0" y="1.5" width="11" height="1.5" fill="#fff"/><rect x="4" y="0" width="3" height="1.5" fill="#fff"/><path d="M1.5 3.5 H9.5 L9 11 H2 Z" fill="#fff"/><path d="M4 5 V9.5 M5.5 5 V9.5 M7 5 V9.5" stroke="#ff5722" stroke-width="0.7"/></svg>
<div class="a" style="left:1840px;top:649px;font-size:17px;color:#fff;line-height:20px;">删除</div>
<div class="hl" style="left:1672px;top:678px;width:228px"></div>
<div class="a" style="left:1686px;top:681px;width:115px;height:34px;background:#0862f7;border-radius:2px"></div>
<svg class="a" style="left:1699px;top:690px" width="16" height="16" viewBox="0 0 16 16"><path d="M14.2 8.4 A6.3 6.3 0 1 1 11.5 3.04" fill="none" stroke="#fff" stroke-width="1.7"/><path d="M10.3 6.7 L14.9 6.7 L14.9 2 Z" fill="#fff"/></svg>
<div class="a" style="left:1720px;top:688px;font-size:17px;color:#fff;line-height:20px;">重新执行</div>
<div class="a" style="left:1805px;top:681px;width:82px;height:34px;background:#fe5722;border-radius:2px"></div>
<svg class="a" style="left:1821px;top:693px" width="11" height="11" viewBox="0 0 11 11"><rect x="0" y="1.5" width="11" height="1.5" fill="#fff"/><rect x="4" y="0" width="3" height="1.5" fill="#fff"/><path d="M1.5 3.5 H9.5 L9 11 H2 Z" fill="#fff"/><path d="M4 5 V9.5 M5.5 5 V9.5 M7 5 V9.5" stroke="#ff5722" stroke-width="0.7"/></svg>
<div class="a" style="left:1840px;top:688px;font-size:17px;color:#fff;line-height:20px;">删除</div>
<div class="hl" style="left:1672px;top:716px;width:228px"></div>
<div class="th" style="left:1672px;width:228px;top:362px;line-height:20px">操作</div>
<div class="a" style="left:265px;top:746px;width:1579px;height:10px;background:#e3e3e3"></div>
<div class="hl" style="left:265px;top:756px;width:1635px;background:#ececec"></div>
<svg class="a" style="left:271px;top:775px" width="10" height="15" viewBox="0 0 10 15"><path d="M8.5 1 L2 7.5 L8.5 14" fill="none" stroke="#ccc" stroke-width="1.3"/></svg>
<div class="a" style="left:297px;top:768px;width:35px;height:29px;border-radius:14.5px;background:#5fb878"></div>
<div class="a" style="left:297px;top:772px;width:35px;text-align:center;font-size:14px;color:#fff;font-weight:bold;line-height:20px">1</div>
<svg class="a" style="left:347px;top:775px" width="10" height="15" viewBox="0 0 10 15"><path d="M1.5 1 L8 7.5 L1.5 14" fill="none" stroke="#bbb" stroke-width="1.3"/></svg>
<div class="a" style="left:375px;top:772px;font-size:14px;color:#999;line-height:20px;">到第</div>
<div class="a" style="left:413px;top:768px;width:45px;height:29px;border:1px solid #e6e6e6;border-radius:2px"></div>
<div class="a" style="left:413px;top:772px;width:45px;text-align:center;font-size:14px;color:#333;line-height:20px">1</div>
<div class="a" style="left:469px;top:772px;font-size:14px;color:#999;line-height:20px;">页</div>
<div class="a" style="left:494px;top:768px;width:51px;height:29px;border:1px solid #e6e6e6;border-radius:2px"></div>
<div class="a" style="left:506px;top:773px;font-size:14px;color:#333;line-height:20px;">确定</div>
<div class="a" style="left:557px;top:772px;font-size:14px;color:#333;line-height:20px;">共 8 条</div>
<div class="a" style="left:610px;top:768px;width:85px;height:29px;border:1px solid #e6e6e6;border-radius:2px"></div>
<div class="a" style="left:619px;top:772px;font-size:14px;color:#333;line-height:20px;">10 条/页</div>
<svg class="a" style="left:678px;top:778px" width="10" height="7" viewBox="0 0 10 7"><path d="M1 1 L5 5.5 L9 1" fill="none" stroke="#111" stroke-width="1.8"/></svg>
<div class="a" style="left:248px;top:820px;width:1669px;height:17px;background:#f4f4f4;border-radius:0 3px 3px 0"></div>
<div class="a" style="left:265px;top:859px;width:1635px;height:100px;border:1px solid #ececec"></div>
<div class="bo" style="left:288px;top:873px;width:74px;height:33px"></div>
<svg class="a" style="left:304px;top:881px" width="17" height="17" viewBox="0 0 16 16"><path d="M8 1.7 A6.8 6.8 0 1 0 14.7 7.32" fill="none" stroke="#35a39b" stroke-width="1.15"/><path d="M11 1.9 H15 V5.9" fill="none" stroke="#35a39b" stroke-width="1.15"/></svg>
<div class="a" style="left:323px;top:880px;font-size:14px;color:#35a39b;line-height:20px;">刷新</div>
<div class="bo" style="left:367px;top:873px;width:74px;height:33px"></div>
<svg class="a" style="left:382px;top:881px" width="17" height="17" viewBox="0 0 17 17"><circle cx="7" cy="7" r="5.8" fill="none" stroke="#35a39b" stroke-width="1.3"/><path d="M11.2 11.2 L15.5 15.5" stroke="#35a39b" stroke-width="1.6"/><path d="M4 6 A3 3 0 0 1 6 4" fill="none" stroke="#35a39b" stroke-width="1"/></svg>
<div class="a" style="left:401px;top:880px;font-size:14px;color:#35a39b;line-height:20px;">搜索</div>
<svg class="a" style="left:450px;top:883px" width="9" height="12" viewBox="0 0 9 12"><path d="M0 0 L9 6 L0 12 Z" fill="#222"/></svg>
<div class="a" style="left:464px;top:879px;font-size:16px;color:#333;line-height:20px;">数据准备任务列表</div>
<div class="a" style="left:1810px;top:872px;width:30px;height:33px;border:1px solid #cfcfcf;border-radius:3px"></div>
<div class="a" style="left:1851px;top:872px;width:29px;height:33px;border:1px solid #cfcfcf;border-radius:3px"></div>
<svg class="a" style="left:1818px;top:881px" width="16" height="16" viewBox="0 0 16 16"><path d="M1 9 H14 V16 H3 Z" fill="#333"/><path d="M4 9 V7 H9 M9 6 V6 H14 V9" fill="none" stroke="#333" stroke-width="1.2"/><path d="M5 8 C5 4 7 3 10 3 V1 L13 4 L10 7 V5 C8 5 6.5 5.5 6 8" fill="#333"/></svg>
<svg class="a" style="left:1860px;top:882px" width="15" height="15" viewBox="0 0 15 15"><rect x="0.6" y="0.6" width="5.8" height="5.4" fill="none" stroke="#333" stroke-width="1.2"/><rect x="8.1" y="0.6" width="5.8" height="5.4" fill="none" stroke="#333" stroke-width="1.2"/><path d="M1.2 8.5 V14 M4.2 8.5 V14 M8.7 8.5 V14 M11.7 8.5 V14" stroke="#333" stroke-width="1.2"/></svg>
<div class="a" style="left:1917px;top:116px;width:3px;height:548px;background:#e0e0e0"></div>
<!--MAIN_END-->

<div id="footer"><div class="a" style="left:538px;top:14px;line-height:20px;letter-spacing:-0.16px">Copyright © 苏州银丰睿哲信息科技有限公司版权所有 | 客服电话：0512-87818837</div></div>

</body></html>
